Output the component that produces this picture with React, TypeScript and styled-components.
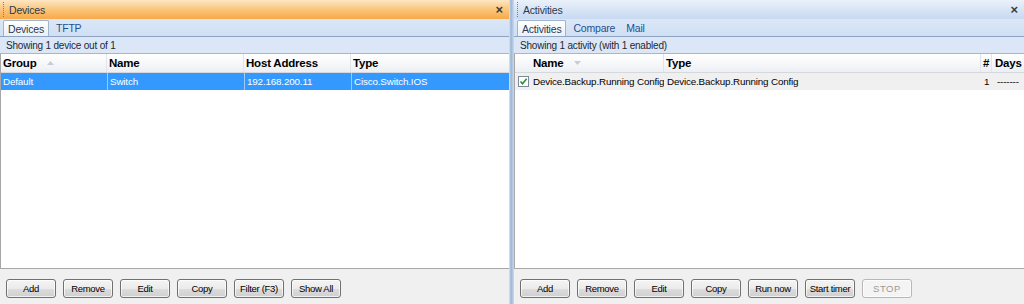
import React, { FC } from "react";
import styled, { createGlobalStyle, css } from "styled-components";

const GlobalStyle = createGlobalStyle`
  html, body {
    margin: 0;
    padding: 0;
    background: #f0f0f0;
    overflow: hidden;
  }
  body {
    font-family: "Liberation Sans", Arial, sans-serif;
    color: #000;
  }
`;

const Screen = styled.div`
  display: flex;
  width: 1024px;
  height: 304px;
`;

const Panel = styled.div<{ $width?: number }>`
  display: flex;
  flex-direction: column;
  height: 100%;
  min-width: 0;
  ${(p) => (p.$width ? css`width: ${p.$width}px;` : css`flex: 1;`)}
`;

const Splitter = styled.div`
  width: 5px;
  flex-shrink: 0;
  background: linear-gradient(to right, #e4ebf4 0, #b4c9e3 1px, #a3bbda 2px, #a3bbda 3px, #c3d4ea 4px);
`;

const TitleBar = styled.div<{ $active?: boolean }>`
  display: flex;
  align-items: center;
  height: 19px;
  padding: 0 6px 0 3px;
  box-sizing: border-box;
  background: ${(p) =>
    p.$active
      ? "linear-gradient(to bottom, #fee7c4 0%, #fbc880 45%, #f8a94b 100%)"
      : "linear-gradient(to bottom, #eaf1fb 0%, #d8e5f6 50%, #c7d9f1 100%)"};
`;

const Grip = styled.span`
  width: 1px;
  height: 15px;
  margin-right: 4px;
  border-left: 1px dotted #8c7a63;
`;

const TitleText = styled.span`
  flex: 1;
  font-size: 10.5px;
  letter-spacing: -0.2px;
  color: #2b3a4f;
`;

const CloseBtn = styled.span`
  font-size: 13px;
  font-weight: bold;
  color: #3c3c3c;
  line-height: 1;
`;

const TabStrip = styled.div`
  display: flex;
  align-items: flex-end;
  height: 18px;
  padding-left: 3px;
  box-sizing: border-box;
  background: linear-gradient(to bottom, #dbe7f7, #cfdff4);
  border-bottom: 1px solid #8da3bf;
`;

const Tab = styled.div<{ $active?: boolean }>`
  height: 16px;
  padding: 0 4px 0 4px;
  margin-right: 3px;
  box-sizing: border-box;
  display: flex;
  align-items: center;
  font-size: 10.5px;
  letter-spacing: -0.2px;
  ${(p) =>
    p.$active
      ? css`
          color: #2b3a4f;
          background: linear-gradient(to bottom, #ffffff, #e9f0f9);
          border: 1px solid #9fb4cf;
          border-bottom: none;
          border-radius: 2px 2px 0 0;
        `
      : css`
          color: #1f4f8f;
          padding: 0 4px;
        `}
`;

const StatusBar = styled.div`
  height: 16px;
  display: flex;
  align-items: center;
  padding-left: 6px;
  font-size: 10px;
  letter-spacing: -0.2px;
  color: #1d2733;
  background: #dbe7f6;
  border-bottom: 1px solid #a9b6c6;
`;

const Grid = styled.div`
  flex: 1;
  display: flex;
  flex-direction: column;
  background: #fff;
  border-left: 1px solid #a7a7a7;
  border-bottom: 1px solid #a7a7a7;
`;

const HeaderRow = styled.div<{ $cols: string }>`
  display: grid;
  grid-template-columns: ${(p) => p.$cols};
  height: 19px;
  box-sizing: border-box;
  background: linear-gradient(to bottom, #ffffff 0%, #f7f8fa 50%, #eceff3 100%);
  border-bottom: 1px solid #d5d9de;
`;

const HeaderCell = styled.div<{ $indent?: number }>`
  display: flex;
  align-items: center;
  padding-left: ${(p) => p.$indent ?? 2}px;
  font-size: 11.5px;
  font-weight: bold;
  letter-spacing: -0.2px;
  border-right: 1px solid #e1e4e8;
  white-space: nowrap;
  overflow: hidden;

  &:last-child {
    border-right: none;
  }
`;

const SortArrow = styled.svg`
  margin-left: 10px;
`;

const DataRow = styled.div<{ $cols: string; $selected?: boolean }>`
  display: grid;
  grid-template-columns: ${(p) => p.$cols};
  height: 17px;
  background: ${(p) => (p.$selected ? "#3399ff" : "#f0f0f0")};
  color: ${(p) => (p.$selected ? "#fff" : "#000")};
`;

const DataCell = styled.div<{ $selected?: boolean; $indent?: number }>`
  display: flex;
  align-items: center;
  padding-left: ${(p) => p.$indent ?? 2}px;
  font-size: 9.8px;
  letter-spacing: -0.15px;
  white-space: nowrap;
  overflow: hidden;
  border-left: 1px solid ${(p) => (p.$selected ? "#9ccbfb" : "transparent")};

  &:first-child {
    border-left: none;
  }
`;

const Check = styled.svg`
  margin-right: 4px;
  flex-shrink: 0;
`;

const Toolbar = styled.div`
  height: 35px;
  display: flex;
  align-items: flex-start;
  gap: 7px;
  padding: 10px 0 0 6px;
  box-sizing: border-box;
  background: #f0f0f0;
`;

const Button = styled.button`
  width: 50px;
  height: 19px;
  padding: 0;
  border: 1px solid #707070;
  border-radius: 3px;
  background: linear-gradient(to bottom, #f4f4f4 0%, #ebebeb 50%, #dddddd 51%, #cfcfcf 100%);
  font-family: "Liberation Sans", Arial, sans-serif;
  font-size: 9.5px;
  letter-spacing: -0.3px;
  color: #000;
  box-shadow: inset 0 0 0 1px rgba(255, 255, 255, 0.7);

  &:disabled {
    border-color: #b7b7b7;
    background: #f4f4f4;
    color: #9a9a9a;
    letter-spacing: 0.6px;
  }
`;

const Filler = styled.div`
  flex: 1;
`;

const UpArrow = () => (
  <SortArrow width="7" height="4" viewBox="0 0 7 4">
    <path d="M0 4 L3.5 0 L7 4 Z" fill="#c5cdd8" />
  </SortArrow>
);

const DownArrow = () => (
  <SortArrow width="7" height="4" viewBox="0 0 7 4">
    <path d="M0 0 L3.5 4 L7 0 Z" fill="#c5cdd8" />
  </SortArrow>
);

const CheckBox = () => (
  <Check width="11" height="11" viewBox="0 0 11 11">
    <rect x="0.5" y="0.5" width="10" height="10" fill="#fdfdfd" stroke="#7a8a99" />
    <path d="M2.5 5.5 L4.5 7.8 L8.6 2.8" fill="none" stroke="#2b8a2b" strokeWidth="1.5" />
  </Check>
);

const deviceCols = "106px 137px 107px 1fr";
const activityCols = "149px 317px 11px 1fr";

const DevicesPanel: FC = () => (
  <Panel $width={509}>
    <TitleBar $active>
      <Grip />
      <TitleText>Devices</TitleText>
      <CloseBtn>×</CloseBtn>
    </TitleBar>
    <TabStrip>
      <Tab $active>Devices</Tab>
      <Tab>TFTP</Tab>
    </TabStrip>
    <StatusBar>Showing 1 device out of 1</StatusBar>
    <Grid>
      <HeaderRow $cols={deviceCols}>
        <HeaderCell>
          Group
          <UpArrow />
        </HeaderCell>
        <HeaderCell>Name</HeaderCell>
        <HeaderCell>Host Address</HeaderCell>
        <HeaderCell>Type</HeaderCell>
      </HeaderRow>
      <DataRow $cols={deviceCols} $selected>
        <DataCell $selected>Default</DataCell>
        <DataCell $selected>Switch</DataCell>
        <DataCell $selected>192.168.200.11</DataCell>
        <DataCell $selected>Cisco.Switch.IOS</DataCell>
      </DataRow>
      <Filler />
    </Grid>
    <Toolbar>
      <Button>Add</Button>
      <Button>Remove</Button>
      <Button>Edit</Button>
      <Button>Copy</Button>
      <Button>Filter (F3)</Button>
      <Button>Show All</Button>
    </Toolbar>
  </Panel>
);

const ActivitiesPanel: FC = () => (
  <Panel>
    <TitleBar>
      <Grip />
      <TitleText>Activities</TitleText>
      <CloseBtn>×</CloseBtn>
    </TitleBar>
    <TabStrip>
      <Tab $active>Activities</Tab>
      <Tab>Compare</Tab>
      <Tab>Mail</Tab>
    </TabStrip>
    <StatusBar>Showing 1 activity (with 1 enabled)</StatusBar>
    <Grid>
      <HeaderRow $cols={activityCols}>
        <HeaderCell $indent={18}>
          Name
          <DownArrow />
        </HeaderCell>
        <HeaderCell>Type</HeaderCell>
        <HeaderCell>#</HeaderCell>
        <HeaderCell $indent={3}>Days</HeaderCell>
      </HeaderRow>
      <DataRow $cols={activityCols}>
        <DataCell $indent={3}>
          <CheckBox />
          Device.Backup.Running Config
        </DataCell>
        <DataCell>Device.Backup.Running Config</DataCell>
        <DataCell>1</DataCell>
        <DataCell $indent={4}>-------</DataCell>
      </DataRow>
      <Filler />
    </Grid>
    <Toolbar>
      <Button>Add</Button>
      <Button>Remove</Button>
      <Button>Edit</Button>
      <Button>Copy</Button>
      <Button>Run now</Button>
      <Button>Start timer</Button>
      <Button disabled>STOP</Button>
    </Toolbar>
  </Panel>
);

const App: FC = () => (
  <>
    <GlobalStyle />
    <Screen>
      <DevicesPanel />
      <Splitter />
      <ActivitiesPanel />
    </Screen>
  </>
);

export default App;
